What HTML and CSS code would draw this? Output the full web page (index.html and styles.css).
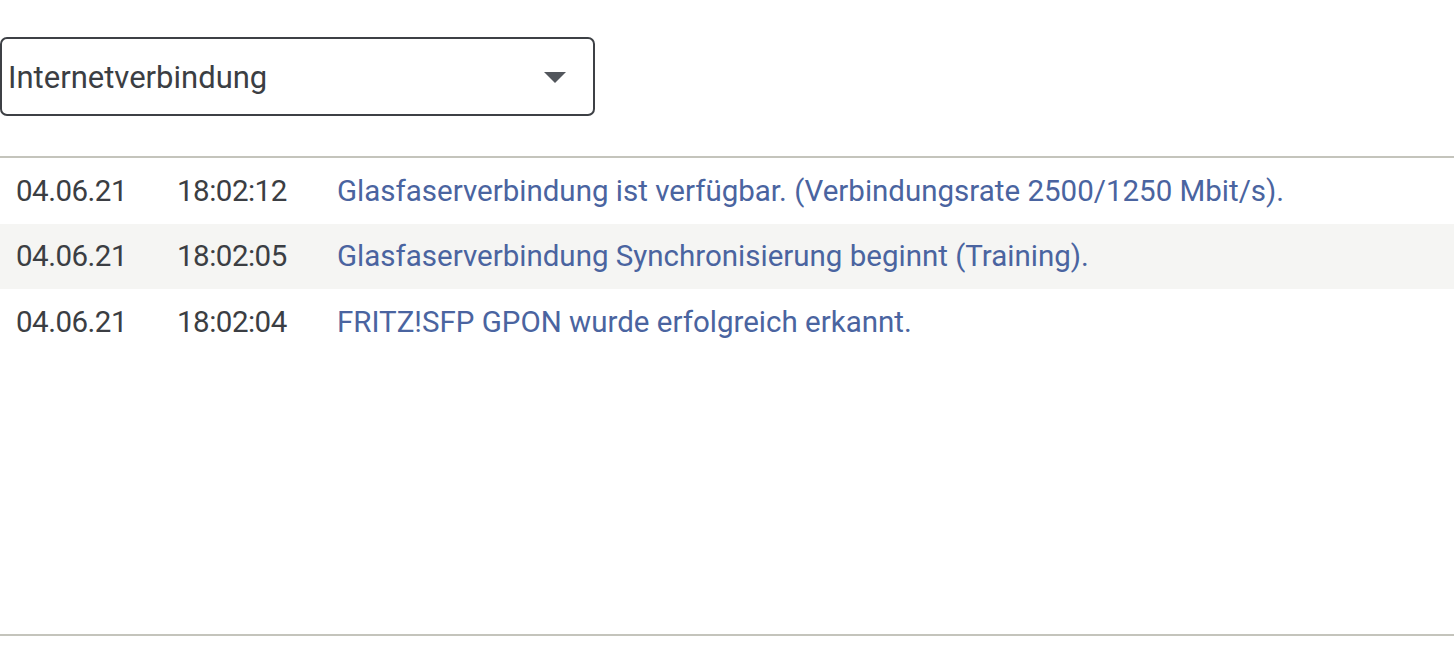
FILE: index.html
```html
<!DOCTYPE html>
<html lang="de">
<head>
<meta charset="utf-8">
<title>Ereignisse</title>
<link rel="stylesheet" href="styles.css">
</head>
<body>
<div class="page">
  <div class="select-wrap">
    <div class="select">
      <span class="select-label">Internetverbindung</span>
      <span class="select-arrow"></span>
    </div>
  </div>
  <div class="log">
    <div class="row">
      <span class="date">04.06.21</span>
      <span class="time">18:02:12</span>
      <span class="msg">Glasfaserverbindung ist verfügbar. (Verbindungsrate 2500/1250 Mbit/s).</span>
    </div>
    <div class="row alt">
      <span class="date">04.06.21</span>
      <span class="time">18:02:05</span>
      <span class="msg">Glasfaserverbindung Synchronisierung beginnt (Training).</span>
    </div>
    <div class="row">
      <span class="date">04.06.21</span>
      <span class="time">18:02:04</span>
      <span class="msg">FRITZ!SFP GPON wurde erfolgreich erkannt.</span>
    </div>
  </div>
</div>
</body>
</html>
```
FILE: styles.css
```css
* { box-sizing: border-box; }
html, body { margin: 0; padding: 0; background: #ffffff; }
body {
  font-family: Roboto, "Noto Sans", sans-serif;
  color: #3b3e43;
  width: 1454px;
  height: 660px;
  overflow: hidden;
}
.page {
  padding-top: 37px;
}
.select {
  width: 595px;
  height: 79px;
  border: 2px solid #3d4045;
  border-radius: 7px;
  display: flex;
  align-items: center;
  justify-content: space-between;
  padding: 0 27px 0 6px;
}
.select-label {
  font-size: 31px;
  color: #3b3e43;
  margin-top: 1px;
}
.select-arrow {
  width: 0;
  height: 0;
  border-left: 11px solid transparent;
  border-right: 11px solid transparent;
  border-top: 11px solid #52565c;
  margin-top: 2px;
}
.log {
  margin-top: 40px;
  height: 480px;
  border-top: 2px solid #c4c4bc;
  border-bottom: 2px solid #c4c4bc;
}
.row {
  display: flex;
  align-items: center;
  height: 65.5px;
  font-size: 29.5px;
}
.row.alt { background: #f5f5f3; }
.date { width: 177px; padding-left: 16px; letter-spacing: -0.5px; }
.time { width: 160px; letter-spacing: -0.5px; }
.msg { color: #4a64a0; }
```
